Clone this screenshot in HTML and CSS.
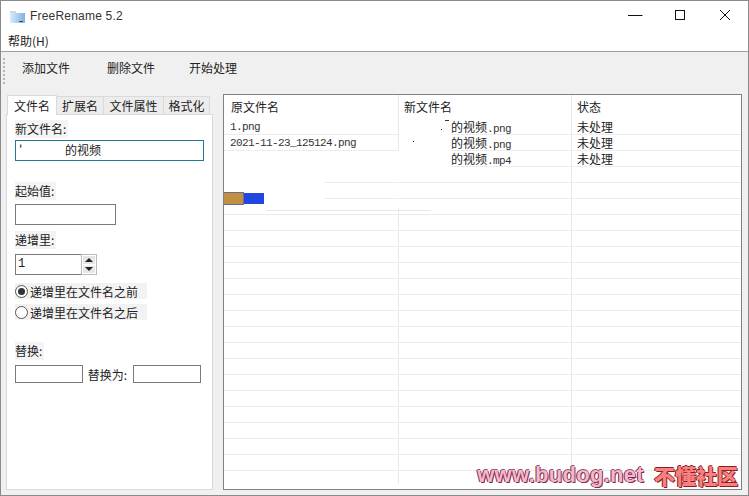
FILE: index.html
```html
<!DOCTYPE html>
<html lang="zh">
<head>
<meta charset="utf-8">
<title>FreeRename 5.2</title>
<link rel="stylesheet" href="styles.css">
</head>
<body>
<div class="window">
  <header class="titlebar">
    <svg class="appicon" width="16" height="12" viewBox="0 0 16 12"><defs><linearGradient id="g" x1="0" x2="1" y1="0" y2="0"><stop offset="0" stop-color="#dcebf8"/><stop offset="1" stop-color="#7fb2e4"/></linearGradient></defs><rect x="0" y="0" width="6" height="3" fill="#c4dcf2"/><rect x="0" y="2" width="15" height="10" fill="url(#g)"/><rect x="9" y="10" width="4" height="1" fill="#34506e"/></svg>
    <span class="apptitle">FreeRename 5.2</span>
    <div class="winbtns">
      <svg width="16" height="16" viewBox="0 0 16 16"><path d="M1 8.5H15.5" stroke="#111" fill="none"/></svg>
      <svg width="16" height="16" viewBox="0 0 16 16"><rect x="3.5" y="3.5" width="9" height="9" stroke="#111" fill="none"/></svg>
      <svg width="16" height="16" viewBox="0 0 16 16"><path d="M3 3L13 13M13 3L3 13" stroke="#111" fill="none"/></svg>
    </div>
  </header>
  <nav class="menubar"><span>帮助(H)</span></nav>
  <div class="toolbar">
    <div class="grip"></div>
    <button class="toolbtn">添加文件</button>
    <button class="toolbtn">删除文件</button>
    <button class="toolbtn">开始处理</button>
  </div>
  <main class="content">
    <section class="side">
      <div class="tabs">
        <span class="tab active">文件名</span>
        <span class="tab">扩展名</span>
        <span class="tab">文件属性</span>
        <span class="tab">格式化</span>
      </div>
      <div class="pane">
        <label class="lbl lbl-first"><span>新文件名:</span></label>
        <div class="input focus"><span class="mask">'</span>的视频</div>
        <label class="lbl lbl-start"><span>起始值:</span></label>
        <div class="input short"></div>
        <label class="lbl lbl-inc"><span>递增里:</span></label>
        <div class="spin">
          <div class="spinval">1</div>
          <div class="spinbtns">
            <span class="sb"><i class="up"></i></span>
            <span class="sb"><i class="down"></i></span>
          </div>
        </div>
        <div class="radio r1"><i class="dot on"></i><span>递增里在文件名之前</span></div>
        <div class="radio r2"><i class="dot"></i><span>递增里在文件名之后</span></div>
        <label class="lbl lbl-rep"><span>替换:</span></label>
        <div class="reprow">
          <div class="input rep"></div>
          <span class="repto">替换为:</span>
          <div class="input rep"></div>
        </div>
      </div>
    </section>
    <section class="table">
      <div class="thead">
        <span class="c1">原文件名</span><span class="c2">新文件名</span><span class="c3">状态</span>
      </div>
      <div class="tbody">
        <div class="row"><span class="c1 mono">1.png</span><span class="c2 newname"><i class="speck s1"></i><i class="speck s2"></i>的视频<em>.png</em></span><span class="c3">未处理</span></div>
        <div class="row"><span class="c1 mono">2021-11-23_125124.png</span><span class="c2 newname"><i class="speck s3"></i>的视频<em>.png</em></span><span class="c3">未处理</span></div>
        <div class="row"><span class="c1 mono"></span><span class="c2 newname">的视频<em>.mp4</em></span><span class="c3">未处理</span></div>
        <div class="row"></div><div class="row"></div><div class="row"></div><div class="row"></div><div class="row"></div><div class="row"></div><div class="row"></div>
        <div class="row"></div><div class="row"></div><div class="row"></div><div class="row"></div><div class="row"></div><div class="row"></div><div class="row"></div><div class="row"></div>
        <div class="row"></div><div class="row"></div><div class="row"></div><div class="row"></div>
        <div class="wipe w1"></div>
        <div class="wipe w2"></div>
        <div class="wipe w3"></div>
        <div class="wipe w4"></div>
        <div class="faint"></div>
        <div class="bar"><b></b><u></u></div>
      </div>
      <div class="stamp"><span class="site">www.budog.net</span><span class="brand">不懂社区</span></div>
    </section>
  </main>
</div>
</body>
</html>
```
FILE: styles.css
```css
* { box-sizing: border-box; }
html, body { margin: 0; padding: 0; }
body {
  width: 749px; height: 496px; overflow: hidden;
  font-family: "Noto Sans CJK SC", "Liberation Sans", sans-serif;
  font-size: 12px; color: #222;
}
.window {
  width: 749px; height: 496px; background: #f0f0f0;
  border: 1px solid #8a8a8a;
  display: flex; flex-direction: column;
}
.titlebar {
  height: 29px; background: #fff; display: flex; align-items: center;
  padding-left: 9px; flex: none;
}
.appicon { margin-right: 4px; margin-top: 2px; }
.apptitle { font-family: "Liberation Sans", sans-serif; font-size: 12px; letter-spacing: .2px; color: #333; }
.winbtns { margin-left: auto; display: flex; gap: 29px; padding-right: 15px; margin-top: -1px; }
.menubar {
  height: 22px; background: #fff; flex: none; padding: 2px 0 0 7px;
  border-bottom: 1px solid #a0a0a0; font-size: 12px; line-height: 18px;
}
.toolbar { height: 39px; flex: none; display: flex; align-items: center; padding-left: 2px; }
.grip { width: 2px; height: 28px; margin-right: 3px; background: repeating-linear-gradient(#b5b5b5 0 2px, transparent 2px 4px); }
.toolbtn {
  border: 0; background: none; font: inherit; color: #222; padding: 0;
  width: 82px; text-align: center; height: 22px; line-height: 22px; margin-top: -7px;
}
.toolbtn:first-of-type { margin-left: -3px; }
.toolbtn:nth-of-type(2) { margin-left: 3px; }
.content { flex: 1; display: flex; padding: 3px 6px 5px 5px; gap: 10px; min-height: 0; }
.side { width: 207px; flex: none; display: flex; flex-direction: column; }
.tabs { display: flex; height: 20px; align-items: flex-end; flex: none; padding-left: 1px; }
.tab {
  height: 18px; line-height: 18px; padding: 0 4px; font-size: 12px; background: #ececec;
  border-top: 1px solid #d9d9d9; border-right: 1px solid #d9d9d9; text-align: center; color: #222;
}
.tab:nth-child(2) { width: 47px; }
.tab:nth-child(3) { width: 60px; }
.tab:nth-child(4) { width: 46px; }
.tab.active { width: 50px; height: 20px; line-height: 19px; background: #fff; border: 1px solid #d9d9d9; border-bottom: 0; margin-bottom: -1px; position: relative; z-index: 1; }
.pane { flex: 1; background: #fff; border: 1px solid #d9d9d9; padding: 0 8px; min-height: 0; }
.lbl { display: block; height: 18px; line-height: 18px; }
.lbl span { background: #f4f4f4; padding-right: 2px; display: inline-block; }
.lbl-first { margin-top: 5px; }
.input { height: 21px; border: 1px solid #7a7a7a; background: #fff; }
.input.focus { width: 189px; margin-top: 2px; border-color: #1f7a9c; line-height: 17px; padding-left: 3px; white-space: nowrap; }
.mask { display: inline-block; width: 46px; }
.input.short { width: 101px; margin-top: 4px; }
.lbl-start { margin-top: 21px; }
.lbl-inc { margin-top: 6px; }
.spin { display: flex; margin-top: 5px; width: 82px; height: 21px; }
.spinval { width: 66px; height: 21px; border: 1px solid #7a7a7a; border-right: 0; padding-left: 2px; line-height: 19px; font-family: "Liberation Mono", monospace; }
.spinbtns { width: 16px; height: 21px; display: flex; flex-direction: column; background: #fff; border: 1px solid #bbb; }
.sb { flex: 1; display: flex; align-items: center; justify-content: center; background: #e6e6e6; border: 1px solid #fff; }
.sb i { width: 0; height: 0; border-left: 4px solid transparent; border-right: 4px solid transparent; }
.sb .up { border-bottom: 4px solid #222; }
.sb .down { border-top: 4px solid #222; }
.radio { display: flex; align-items: center; height: 16px; background: #f2f2f2; width: 132px; }
.r1 { margin-top: 8px; }
.r2 { margin-top: 5px; }
.dot { width: 13px; height: 13px; border-radius: 50%; border: 1px solid #555; background: #fff; margin-right: 2px; flex: none; position: relative; }
.dot.on::after { content: ""; position: absolute; left: 2px; top: 2px; width: 7px; height: 7px; border-radius: 50%; background: #333; }
.lbl-rep { margin-top: 22px; }
.reprow { display: flex; align-items: center; margin-top: 5px; width: 186px; justify-content: space-between; }
.repto { margin-left: -1px; }
.input.rep { width: 68px; height: 18px; }
.table { flex: 1; position: relative; background: #fff; border: 1px solid #808080; overflow: hidden; min-width: 0; }
.thead { height: 24px; display: flex; line-height: 24px; background: #fff; font-size: 12px; }
.thead span, .row span { display: block; }
.c1 { width: 175px; padding-left: 6px; flex: none; }
.thead .c1 { padding-left: 7px; }
.c2 { width: 173px; padding-left: 5px; flex: none; }
.c3 { flex: 1; padding-left: 5px; }
.thead .c1, .thead .c2 { border-right: 1px solid #e8e8e8; }
.tbody {
  position: relative; height: 365px;
  background: linear-gradient(90deg, transparent 174px, #e8e8e8 174px 175px, transparent 175px 347px, #e8e8e8 347px 348px, transparent 348px);
}
.row { height: 16px; display: flex; line-height: 15px; border-bottom: 1px solid #ececec; }
.row span { position: relative; z-index: 1; }
.mono { font-family: "Liberation Mono", monospace; font-size: 11px; letter-spacing: -.6px; color: #333; padding-top: 1px; }
.newname { padding-left: 52px; }
.newname em { font-style: normal; font-family: "Liberation Mono", monospace; font-size: 11px; letter-spacing: -.6px; color: #333; }
.speck { position: absolute; background: #333; height: 1px; }
.s1 { left: 42px; top: 10px; width: 1px; }
.s2 { left: 46px; top: 1px; width: 4px; }
.s3 { left: 14px; top: 6px; width: 1px; }
.wipe { position: absolute; background: #fff; }
.w1 { left: 175px; top: 0; width: 52px; height: 48px; }
.w2 { left: 0; top: 32px; width: 227px; height: 16px; }
.w3 { left: 0; top: 48px; width: 100px; height: 43px; }
.w4 { left: 174px; top: 48px; width: 1px; height: 41px; }
.faint { position: absolute; left: 42px; top: 91px; width: 165px; height: 1px; background: #e8e8e8; }
.bar { position: absolute; left: 0; top: 73px; display: flex; align-items: center; height: 13px; }
.bar b { width: 20px; height: 13px; background: #c09040; border: 1px solid #6a6a9a; border-left: 0; }
.bar u { width: 20px; height: 11px; background: #2346e0; }
.stamp {
  position: absolute; right: 3px; bottom: 2px; display: flex; gap: 10px; align-items: center;
  font-family: "Liberation Sans", sans-serif; font-weight: 700; font-size: 22px; line-height: 24px;
}
.site { color: #f6b6cc; letter-spacing: .3px; text-shadow: 1px 1px 0 #7a2d4a, -1px 0 0 #7a2d4a, 0 -1px 0 #9a5070; }
.brand { color: #f88080; font-family: "Noto Sans CJK SC", sans-serif; font-weight: 900; font-size: 21px; text-shadow: 1px 1px 0 #8a1f1f, -1px 0 0 #8a1f1f, 0 -1px 0 #8a1f1f; }
```
